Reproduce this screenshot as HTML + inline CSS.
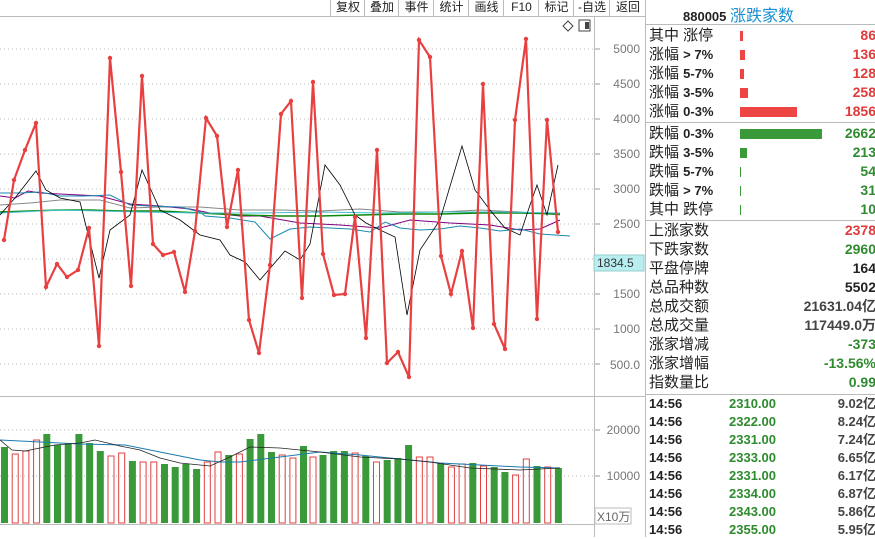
<!DOCTYPE html>
<html><head><meta charset="utf-8"><style>
body{margin:0;width:875px;height:537px;overflow:hidden;background:#fff;font-family:"Liberation Sans","Noto Sans CJK SC",sans-serif;position:relative}
.tb{position:absolute;top:0;height:16px;border-left:1px solid #bbb;font-size:12px;color:#222;line-height:15px;text-align:center}
.rp{position:absolute;left:645px;top:0;width:230px;height:537px;border-left:1px solid #bbb}
.r{position:absolute;left:3px;width:227px;height:19px;font-size:15px;line-height:19px;color:#222}
.r em{font-style:normal;font-weight:bold;font-size:13px}
.r b{position:absolute;right:0;top:0;font-size:14px;font-weight:bold}
.bar{position:absolute;left:91px;top:5px;height:10px}
.t{position:absolute;left:3px;width:227px;height:18px;font-size:13px;line-height:18px;font-weight:bold;color:#222}
.t span{position:absolute}
.red{color:#e03a3a}.grn{color:#2e8b2e}
</style></head><body>
<div style="position:absolute;left:0;top:16px;width:645px;border-top:1px solid #bbb"></div>
<div class="tb" style="left:330px;width:34px">复权</div>
<div class="tb" style="left:364px;width:34px">叠加</div>
<div class="tb" style="left:398px;width:35px">事件</div>
<div class="tb" style="left:433px;width:35px">统计</div>
<div class="tb" style="left:468px;width:35px">画线</div>
<div class="tb" style="left:503px;width:35px">F10</div>
<div class="tb" style="left:538px;width:35px">标记</div>
<div class="tb" style="left:573px;width:36px">-自选</div>
<div class="tb" style="left:609px;width:36px">返回</div>
<svg width="645" height="537" style="position:absolute;left:0;top:0" font-family="Liberation Sans" font-size="12">
<line x1="594.5" y1="17" x2="594.5" y2="537" stroke="#bbb"/>
<line x1="0" y1="396.5" x2="645" y2="396.5" stroke="#bbb"/>
<line x1="0" y1="524.5" x2="594" y2="524.5" stroke="#bbb"/>
<g stroke="#bbb" stroke-dasharray="1,3">
<line x1="0" y1="49" x2="594" y2="49"/><line x1="0" y1="84" x2="594" y2="84"/><line x1="0" y1="119" x2="594" y2="119"/><line x1="0" y1="154" x2="594" y2="154"/><line x1="0" y1="189" x2="594" y2="189"/><line x1="0" y1="224" x2="594" y2="224"/><line x1="0" y1="259" x2="594" y2="259"/><line x1="0" y1="294" x2="594" y2="294"/><line x1="0" y1="329" x2="594" y2="329"/><line x1="0" y1="364" x2="594" y2="364"/>
<line x1="0" y1="430" x2="594" y2="430"/><line x1="0" y1="476" x2="594" y2="476"/>
</g>
<g stroke="#999"><line x1="595" y1="49" x2="600" y2="49"/><line x1="595" y1="84" x2="600" y2="84"/><line x1="595" y1="119" x2="600" y2="119"/><line x1="595" y1="154" x2="600" y2="154"/><line x1="595" y1="189" x2="600" y2="189"/><line x1="595" y1="224" x2="600" y2="224"/><line x1="595" y1="294" x2="600" y2="294"/><line x1="595" y1="329" x2="600" y2="329"/><line x1="595" y1="364" x2="600" y2="364"/><line x1="595" y1="430" x2="600" y2="430"/><line x1="595" y1="476" x2="600" y2="476"/></g>
<g fill="#777" text-anchor="end">
<text x="640" y="53">5000</text><text x="640" y="88">4500</text><text x="640" y="123">4000</text><text x="640" y="158">3500</text><text x="640" y="193">3000</text><text x="640" y="228">2500</text><text x="640" y="298">1500</text><text x="640" y="333">1000</text><text x="640" y="369">500.0</text>
<text x="640" y="434">20000</text><text x="640" y="480">10000</text>
</g>
<rect x="594" y="255" width="50" height="16" fill="#b8eef0" stroke="#9cc"/>
<text x="597" y="267" fill="#333">1834.5</text>
<rect x="595" y="508" width="36" height="16" fill="#fff" stroke="#bbb"/>
<text x="597" y="521" fill="#666">X10万</text>
<path d="M568 21l5 5-5 5-5-5z" fill="none" stroke="#444"/>
<rect x="579" y="20" width="11" height="11" fill="none" stroke="#444"/><rect x="585" y="22" width="4" height="7" fill="#444"/>
<polyline fill="none" stroke="#888" stroke-width="1" points="0,205 30,203 60,200 100,200 130,208 160,207 200,207 240,210 280,210 320,211 360,209 400,212 440,212 480,210 520,212 560,215"/>
<polyline fill="none" stroke="#800080" stroke-width="1" points="0,196 15,198 28,191 40,193 60,194 100,196 130,204 160,206 190,209 210,213 240,216 260,216 300,223 340,225 380,228 410,220 450,223 490,225 520,230 540,229 560,220"/>
<polyline fill="none" stroke="#1a8ab0" stroke-width="1" points="0,193 10,193 20,193 40,192 60,196 85,196 110,195 130,205 150,206 180,207 200,212 205,216 230,218 255,222 270,239 290,229 310,227 330,228 350,229 370,232 385,222 400,228 420,230 440,229 460,226 480,228 500,231 520,229 540,234 570,236"/>
<polyline fill="none" stroke="#0a8a0a" stroke-width="1.5" points="0,212 30,211 60,210 90,210 120,211 160,211 200,213 240,215 280,216 320,216 360,215 400,214 440,214 480,213 520,213 560,214"/>
<polyline fill="none" stroke="#40c0d0" stroke-width="1" points="0,213 60,210 100,211 140,212 200,213 260,213 320,212 380,213 440,212 500,212 560,213"/>
<polyline fill="none" stroke="#000" stroke-width="0.8" points="0,215 15,198 36,171 46,190 60,198 80,202 99,278 110,230 130,215 142,170 160,210 180,220 200,235 220,240 230,255 245,262 260,280 285,251 300,260 310,244 325,165 340,185 355,215 366,223 380,230 395,237 407,315 420,250 440,220 462,146 475,190 490,210 505,228 520,235 530,205 537,185 547,215 558,165"/>
<polyline fill="none" stroke="#e84040" stroke-width="2.2" points="4,240 14,180 25,150 36,123 46,287 57,264 67,277 78,270 89,228 99,346 110,58 121,172 131,286 142,76 153,244 163,255 174,252 185,292 195,231 206,118 217,136 227,227 238,170 249,320 259,353 270,265 281,114 291,101 302,298 313,82 323,254 334,295 345,294 355,217 366,338 377,150 387,363 398,352 409,377 419,40 430,57 441,256 451,294 462,251 473,328 483,84 494,324 505,349 515,120 526,39 537,319 547,120 558,232"/>
<g fill="#e84040">
<circle cx="4" cy="240" r="2.2"/><circle cx="14" cy="180" r="2.2"/><circle cx="25" cy="150" r="2.2"/><circle cx="36" cy="123" r="2.2"/><circle cx="46" cy="287" r="2.2"/><circle cx="57" cy="264" r="2.2"/><circle cx="67" cy="277" r="2.2"/><circle cx="78" cy="270" r="2.2"/><circle cx="89" cy="228" r="2.2"/><circle cx="99" cy="346" r="2.2"/><circle cx="110" cy="58" r="2.2"/><circle cx="121" cy="172" r="2.2"/><circle cx="131" cy="286" r="2.2"/><circle cx="142" cy="76" r="2.2"/><circle cx="153" cy="244" r="2.2"/><circle cx="163" cy="255" r="2.2"/><circle cx="174" cy="252" r="2.2"/><circle cx="185" cy="292" r="2.2"/><circle cx="195" cy="231" r="2.2"/><circle cx="206" cy="118" r="2.2"/><circle cx="217" cy="136" r="2.2"/><circle cx="227" cy="227" r="2.2"/><circle cx="238" cy="170" r="2.2"/><circle cx="249" cy="320" r="2.2"/><circle cx="259" cy="353" r="2.2"/><circle cx="270" cy="265" r="2.2"/><circle cx="281" cy="114" r="2.2"/><circle cx="291" cy="101" r="2.2"/><circle cx="302" cy="298" r="2.2"/><circle cx="313" cy="82" r="2.2"/><circle cx="323" cy="254" r="2.2"/><circle cx="334" cy="295" r="2.2"/><circle cx="345" cy="294" r="2.2"/><circle cx="355" cy="217" r="2.2"/><circle cx="366" cy="338" r="2.2"/><circle cx="377" cy="150" r="2.2"/><circle cx="387" cy="363" r="2.2"/><circle cx="398" cy="352" r="2.2"/><circle cx="409" cy="377" r="2.2"/><circle cx="419" cy="40" r="2.2"/><circle cx="430" cy="57" r="2.2"/><circle cx="441" cy="256" r="2.2"/><circle cx="451" cy="294" r="2.2"/><circle cx="462" cy="251" r="2.2"/><circle cx="473" cy="328" r="2.2"/><circle cx="483" cy="84" r="2.2"/><circle cx="494" cy="324" r="2.2"/><circle cx="505" cy="349" r="2.2"/><circle cx="515" cy="120" r="2.2"/><circle cx="526" cy="39" r="2.2"/><circle cx="537" cy="319" r="2.2"/><circle cx="547" cy="120" r="2.2"/><circle cx="558" cy="232" r="2.2"/>
</g>
<g>
<rect x="1" y="447" width="7" height="76" fill="#3a9a3a"/>
<rect x="12.2" y="454" width="6" height="69" fill="none" stroke="#e04040"/>
<rect x="22.9" y="451" width="6" height="72" fill="none" stroke="#e04040"/>
<rect x="33.6" y="440" width="6" height="83" fill="none" stroke="#e04040"/>
<rect x="43.3" y="434" width="7" height="89" fill="#3a9a3a"/>
<rect x="54" y="445" width="7" height="78" fill="#3a9a3a"/>
<rect x="64.7" y="443" width="7" height="80" fill="#3a9a3a"/>
<rect x="75.4" y="434" width="7" height="89" fill="#3a9a3a"/>
<rect x="86.1" y="443" width="7" height="80" fill="#3a9a3a"/>
<rect x="96.8" y="451" width="7" height="72" fill="#3a9a3a"/>
<rect x="108" y="456" width="6" height="67" fill="none" stroke="#e04040"/>
<rect x="118.7" y="453" width="6" height="70" fill="none" stroke="#e04040"/>
<rect x="128.9" y="461" width="7" height="62" fill="#3a9a3a"/>
<rect x="140.1" y="462" width="6" height="61" fill="none" stroke="#e04040"/>
<rect x="150.8" y="462" width="6" height="61" fill="none" stroke="#e04040"/>
<rect x="161" y="464" width="7" height="59" fill="#3a9a3a"/>
<rect x="171.7" y="467" width="7" height="56" fill="#3a9a3a"/>
<rect x="182.4" y="464" width="7" height="59" fill="#3a9a3a"/>
<rect x="193.1" y="469" width="7" height="54" fill="#3a9a3a"/>
<rect x="204.3" y="462" width="6" height="61" fill="none" stroke="#e04040"/>
<rect x="215" y="452" width="6" height="71" fill="none" stroke="#e04040"/>
<rect x="225.2" y="455" width="7" height="68" fill="#3a9a3a"/>
<rect x="236.4" y="454" width="6" height="69" fill="none" stroke="#e04040"/>
<rect x="246.6" y="439" width="7" height="84" fill="#3a9a3a"/>
<rect x="257.3" y="434" width="7" height="89" fill="#3a9a3a"/>
<rect x="268" y="452" width="7" height="71" fill="#3a9a3a"/>
<rect x="279.2" y="455" width="6" height="68" fill="none" stroke="#e04040"/>
<rect x="289.9" y="458" width="6" height="65" fill="none" stroke="#e04040"/>
<rect x="300" y="446" width="7" height="77" fill="#3a9a3a"/>
<rect x="310" y="457" width="6" height="66" fill="none" stroke="#e04040"/>
<rect x="319.5" y="455" width="7" height="68" fill="#3a9a3a"/>
<rect x="330.2" y="451" width="7" height="72" fill="#3a9a3a"/>
<rect x="340.9" y="451" width="7" height="72" fill="#3a9a3a"/>
<rect x="352.1" y="453" width="6" height="70" fill="none" stroke="#e04040"/>
<rect x="362.3" y="456" width="7" height="67" fill="#3a9a3a"/>
<rect x="373.5" y="462" width="6" height="61" fill="none" stroke="#e04040"/>
<rect x="383.7" y="460" width="7" height="63" fill="#3a9a3a"/>
<rect x="394.4" y="458" width="7" height="65" fill="#3a9a3a"/>
<rect x="405.1" y="445" width="7" height="78" fill="#3a9a3a"/>
<rect x="416.3" y="457" width="6" height="66" fill="none" stroke="#e04040"/>
<rect x="427" y="457" width="6" height="66" fill="none" stroke="#e04040"/>
<rect x="437.2" y="463" width="7" height="60" fill="#3a9a3a"/>
<rect x="448.4" y="467" width="6" height="56" fill="none" stroke="#e04040"/>
<rect x="459.1" y="464" width="6" height="59" fill="none" stroke="#e04040"/>
<rect x="469.3" y="463" width="7" height="60" fill="#3a9a3a"/>
<rect x="480.5" y="466" width="6" height="57" fill="none" stroke="#e04040"/>
<rect x="490.7" y="467" width="7" height="56" fill="#3a9a3a"/>
<rect x="501.4" y="472" width="7" height="51" fill="#3a9a3a"/>
<rect x="512.6" y="475" width="6" height="48" fill="none" stroke="#e04040"/>
<rect x="523.3" y="459" width="6" height="64" fill="none" stroke="#e04040"/>
<rect x="533.5" y="466" width="7" height="57" fill="#3a9a3a"/>
<rect x="544.7" y="467" width="6" height="56" fill="none" stroke="#e04040"/>
<rect x="554.9" y="468" width="7" height="55" fill="#3a9a3a"/>
</g>
<polyline fill="none" stroke="#1a7ab0" stroke-width="1" points="0,440 40,442 80,444 125,445 160,452 200,460 220,462 240,462 280,457 320,452 360,455 400,459 440,463 480,465 520,467 560,468"/>
<polyline fill="none" stroke="#222" stroke-width="0.8" points="0,440 12,450 25,451 40,448 55,445 80,443 95,440 120,446 140,450 160,458 180,463 200,465 210,466 230,457 250,447 280,448 320,452 360,457 400,459 430,462 470,468 520,470 560,468"/>
</svg>
<div class="rp">
<div style="position:absolute;left:37px;top:2px;font-size:13px;font-weight:bold;color:#222">880005 <span style="font-weight:normal;font-size:16px;color:#1a8fd0">涨跌家数</span></div>
<div style="position:absolute;left:0;top:24px;width:230px;border-top:1px solid #bbb"></div>
<div class="r" style="top:26px">其中 涨停<i class="bar" style="width:3px;background:#ee4444"></i><b class="red">86</b></div>
<div class="r" style="top:45px">涨幅 <em>&gt; 7%</em><i class="bar" style="width:5px;background:#ee4444"></i><b class="red">136</b></div>
<div class="r" style="top:64px">涨幅 <em>5-7%</em><i class="bar" style="width:4px;background:#ee4444"></i><b class="red">128</b></div>
<div class="r" style="top:83px">涨幅 <em>3-5%</em><i class="bar" style="width:8px;background:#ee4444"></i><b class="red">258</b></div>
<div class="r" style="top:102px">涨幅 <em>0-3%</em><i class="bar" style="width:57px;background:#ee4444"></i><b class="red">1856</b></div>
<div style="position:absolute;left:0;top:122px;width:230px;border-top:1px solid #bbb"></div>
<div class="r" style="top:124px">跌幅 <em>0-3%</em><i class="bar" style="width:82px;background:#3a9a3a"></i><b class="grn">2662</b></div>
<div class="r" style="top:143px">跌幅 <em>3-5%</em><i class="bar" style="width:7px;background:#3a9a3a"></i><b class="grn">213</b></div>
<div class="r" style="top:162px">跌幅 <em>5-7%</em><i class="bar" style="width:1px;background:#3a9a3a"></i><b class="grn">54</b></div>
<div class="r" style="top:181px">跌幅 <em>&gt; 7%</em><i class="bar" style="width:1px;background:#3a9a3a"></i><b class="grn">31</b></div>
<div class="r" style="top:200px">其中 跌停<i class="bar" style="width:1px;background:#3a9a3a"></i><b class="grn">10</b></div>
<div style="position:absolute;left:0;top:220px;width:230px;border-top:1px solid #bbb"></div>
<div class="r" style="top:221px">上涨家数<b class="red">2378</b></div>
<div class="r" style="top:240px">下跌家数<b class="grn">2960</b></div>
<div class="r" style="top:259px">平盘停牌<b>164</b></div>
<div class="r" style="top:278px">总品种数<b>5502</b></div>
<div class="r" style="top:297px">总成交额<b style="color:#444">21631.04亿</b></div>
<div class="r" style="top:316px">总成交量<b style="color:#444">117449.0万</b></div>
<div class="r" style="top:335px">涨家增减<b class="grn">-373</b></div>
<div class="r" style="top:354px">涨家增幅<b class="grn">-13.56%</b></div>
<div class="r" style="top:373px">指数量比<b class="grn">0.99</b></div>
<div style="position:absolute;left:0;top:394px;width:230px;border-top:1px solid #bbb"></div>
<div class="t" style="top:395px"><span>14:56</span><span class="grn" style="left:80px">2310.00</span><span style="right:0;color:#444">9.02亿</span></div>
<div class="t" style="top:413px"><span>14:56</span><span class="grn" style="left:80px">2322.00</span><span style="right:0;color:#444">8.24亿</span></div>
<div class="t" style="top:431px"><span>14:56</span><span class="grn" style="left:80px">2331.00</span><span style="right:0;color:#444">7.24亿</span></div>
<div class="t" style="top:449px"><span>14:56</span><span class="grn" style="left:80px">2333.00</span><span style="right:0;color:#444">6.65亿</span></div>
<div class="t" style="top:467px"><span>14:56</span><span class="grn" style="left:80px">2331.00</span><span style="right:0;color:#444">6.17亿</span></div>
<div class="t" style="top:485px"><span>14:56</span><span class="grn" style="left:80px">2334.00</span><span style="right:0;color:#444">6.87亿</span></div>
<div class="t" style="top:503px"><span>14:56</span><span class="grn" style="left:80px">2343.00</span><span style="right:0;color:#444">5.86亿</span></div>
<div class="t" style="top:521px"><span>14:56</span><span class="grn" style="left:80px">2355.00</span><span style="right:0;color:#444">5.95亿</span></div>
</div>
</body></html>
